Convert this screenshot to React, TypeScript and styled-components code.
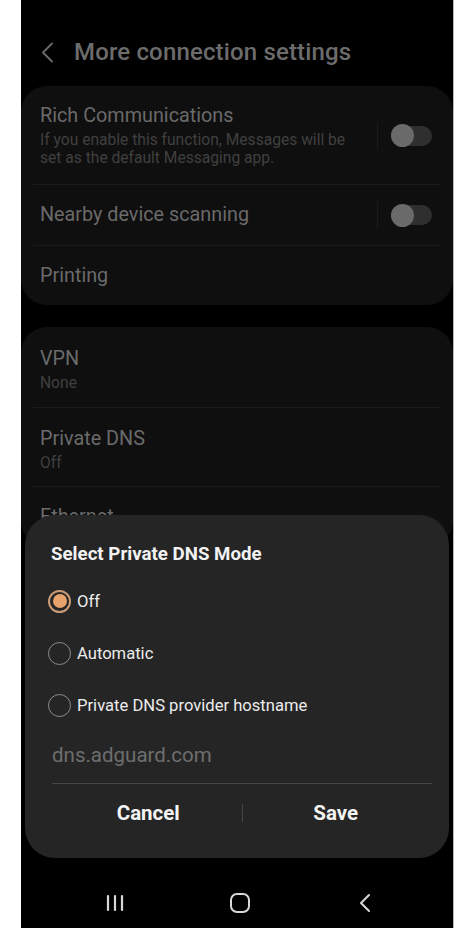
import styled, { createGlobalStyle } from 'styled-components';

const GlobalStyle = createGlobalStyle`
  html, body {
    margin: 0;
    padding: 0;
    background: #ffffff;
  }
  body {
    font-family: Roboto, "Noto Sans", "Liberation Sans", sans-serif;
  }
`;

const Phone = styled.div`
  position: relative;
  box-sizing: border-box;
  width: 433px;
  height: 928px;
  margin-left: 21px;
  background: #000;
  border-right: 1px solid #b8b8b8;
  display: flex;
  flex-direction: column;
  overflow: hidden;
`;

const Header = styled.div`
  display: flex;
  align-items: center;
  gap: 20px;
  height: 36px;
  padding: 34px 0 16px 20px;
`;

const PageTitle = styled.h1`
  margin: 0;
  font-size: 24px;
  font-weight: 500;
  color: #6c6c6c;
  letter-spacing: 0.15px;
`;

const Card = styled.div<{ $gap?: number }>`
  background: #0f0f0f;
  border-radius: 26px;
  margin-top: ${p => p.$gap ?? 0}px;
`;

const Row = styled.div<{ $pt: number; $pb: number }>`
  display: flex;
  align-items: center;
  padding: ${p => p.$pt}px 21px ${p => p.$pb}px 19px;
`;

const Divider = styled.div`
  height: 1px;
  background: #1b1b1b;
  margin: 0 12px;
`;

const RowText = styled.div`
  flex: 1;
  min-width: 0;
`;

const RowTitle = styled.div`
  font-size: 19.8px;
  line-height: 24px;
  color: #6a6a6a;
`;

const RowSub = styled.div<{ $compact?: boolean }>`
  font-size: 15.6px;
  line-height: ${p => (p.$compact ? 22 : 18)}px;
  color: #404040;
  margin-top: ${p => (p.$compact ? 1 : 3)}px;
`;

const SwitchArea = styled.div`
  display: flex;
  align-items: center;
  gap: 13px;
  margin-left: 12px;
`;

const SwitchSeparator = styled.div`
  width: 1px;
  height: 28px;
  background: #1a1a1a;
`;

const Track = styled.div`
  position: relative;
  width: 41px;
  height: 20px;
  border-radius: 10px;
  background: #2f2f2f;
`;

const Thumb = styled.div`
  position: absolute;
  left: 0;
  top: -1.5px;
  width: 23px;
  height: 23px;
  border-radius: 50%;
  background: #6a6a6a;
`;

const Dialog = styled.div`
  position: absolute;
  left: 4px;
  top: 515px;
  width: 424px;
  height: 343px;
  box-sizing: border-box;
  background: #252525;
  border-radius: 30px;
  padding-top: 28px;
  display: flex;
  flex-direction: column;
`;

const DialogTitle = styled.h2`
  margin: 0 0 10px 26px;
  font-size: 18.7px;
  line-height: 22px;
  font-weight: 700;
  color: #f2f2f2;
`;

const RadioRow = styled.div`
  display: flex;
  align-items: center;
  gap: 6px;
  height: 52px;
  padding-left: 23px;
`;

const RadioCircle = styled.div<{ $checked?: boolean }>`
  box-sizing: border-box;
  width: 23px;
  height: 23px;
  border-radius: 50%;
  border: ${p => (p.$checked ? '2px solid #c99a76' : '1.5px solid #8c8c8c')};
  display: flex;
  align-items: center;
  justify-content: center;
  &::after {
    content: '';
    display: ${p => (p.$checked ? 'block' : 'none')};
    width: 14px;
    height: 14px;
    border-radius: 50%;
    background: #e8a26c;
  }
`;

const RadioLabel = styled.span`
  font-size: 16.6px;
  color: #ececec;
`;

const HostInput = styled.div`
  margin: 0 17px 0 27px;
  padding: 12px 0 16px;
  border-bottom: 1px solid #474747;
  font-size: 20.5px;
  line-height: 24px;
  color: #6e6e6e;
`;

const ButtonBar = styled.div`
  display: flex;
  align-items: center;
  height: 58px;
  margin: 0 20px 0 30px;
`;

const DialogButton = styled.button`
  flex: 1;
  background: none;
  border: none;
  padding: 0;
  font-family: inherit;
  font-size: 20.5px;
  font-weight: 700;
  color: #f4f4f4;
  cursor: pointer;
`;

const ButtonSeparator = styled.div`
  width: 1px;
  height: 18px;
  background: #454545;
`;

const NavBar = styled.div`
  margin-top: auto;
  height: 50px;
  display: grid;
  grid-template-columns: repeat(3, 125px);
  padding-left: 31px;
  align-items: center;
  justify-items: center;
`;

const BackChevron = () => (
  <svg width="13" height="21" viewBox="0 0 13 21" fill="none">
    <path d="M11 1.5L2 10.5L11 19.5" stroke="#6c6c6c" strokeWidth="1.8" strokeLinecap="round" strokeLinejoin="round" />
  </svg>
);

const Toggle = () => (
  <SwitchArea>
    <SwitchSeparator />
    <Track>
      <Thumb />
    </Track>
  </SwitchArea>
);

const RecentsIcon = () => (
  <svg width="20" height="18" viewBox="0 0 20 18" fill="none">
    <path d="M3 2V16M10 2V16M17 2V16" stroke="#d8d8d8" strokeWidth="2.2" strokeLinecap="round" />
  </svg>
);

const HomeIcon = () => (
  <svg width="22" height="22" viewBox="0 0 22 22" fill="none">
    <rect x="2" y="2" width="18" height="18" rx="6" stroke="#d8d8d8" strokeWidth="2" />
  </svg>
);

const NavBackIcon = () => (
  <svg width="14" height="20" viewBox="0 0 14 20" fill="none">
    <path d="M11 2L3 10L11 18" stroke="#d8d8d8" strokeWidth="2" strokeLinecap="round" strokeLinejoin="round" />
  </svg>
);

const App = () => {
  const modes = [
    { id: 'off', label: 'Off', checked: true },
    { id: 'auto', label: 'Automatic', checked: false },
    { id: 'host', label: 'Private DNS provider hostname', checked: false },
  ];

  return (
    <>
      <GlobalStyle />
      <Phone>
        <Header>
          <BackChevron />
          <PageTitle>More connection settings</PageTitle>
        </Header>

        <Card>
          <Row $pt={18} $pb={17}>
            <RowText>
              <RowTitle>Rich Communications</RowTitle>
              <RowSub>
                If you enable this function, Messages will be
                <br />
                set as the default Messaging app.
              </RowSub>
            </RowText>
            <Toggle />
          </Row>
          <Divider />
          <Row $pt={16} $pb={16}>
            <RowText>
              <RowTitle>Nearby device scanning</RowTitle>
            </RowText>
            <Toggle />
          </Row>
          <Divider />
          <Row $pt={18} $pb={17}>
            <RowText>
              <RowTitle>Printing</RowTitle>
            </RowText>
          </Row>
        </Card>

        <Card $gap={22}>
          <Row $pt={20} $pb={13}>
            <RowText>
              <RowTitle>VPN</RowTitle>
              <RowSub $compact>None</RowSub>
            </RowText>
          </Row>
          <Divider />
          <Row $pt={19} $pb={12}>
            <RowText>
              <RowTitle>Private DNS</RowTitle>
              <RowSub $compact>Off</RowSub>
            </RowText>
          </Row>
          <Divider />
          <Row $pt={18} $pb={18}>
            <RowText>
              <RowTitle>Ethernet</RowTitle>
            </RowText>
          </Row>
        </Card>

        <Dialog>
          <DialogTitle>Select Private DNS Mode</DialogTitle>
          {modes.map(m => (
            <RadioRow key={m.id}>
              <RadioCircle $checked={m.checked} />
              <RadioLabel>{m.label}</RadioLabel>
            </RadioRow>
          ))}
          <HostInput>dns.adguard.com</HostInput>
          <ButtonBar>
            <DialogButton>Cancel</DialogButton>
            <ButtonSeparator />
            <DialogButton>Save</DialogButton>
          </ButtonBar>
        </Dialog>

        <NavBar>
          <RecentsIcon />
          <HomeIcon />
          <NavBackIcon />
        </NavBar>
      </Phone>
    </>
  );
};

export default App;
